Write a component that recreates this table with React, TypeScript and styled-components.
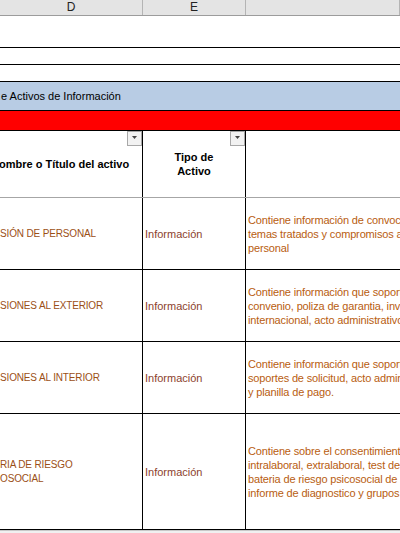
import React from "react";
import styled, { createGlobalStyle } from "styled-components";

const Global = createGlobalStyle`
  html, body { margin: 0; padding: 0; background: #ffffff; overflow: hidden; }
  body { font-family: "Liberation Sans", Arial, sans-serif; }
`;

const Sheet = styled.div`
  width: 400px;
  height: 533px;
  overflow: hidden;
  display: flex;
  flex-direction: column;
  background: #fff;
`;

const ColHeaderBar = styled.div`
  display: grid;
  grid-template-columns: 143px 103px 1fr;
  height: 16px;
  box-sizing: border-box;
  background: #e4e4e4;
  border-bottom: 1px solid #9c9c9c;
  flex: none;
`;

const ColLetter = styled.div`
  box-sizing: border-box;
  border-right: 1px solid #b4b4b4;
  font-size: 12px;
  color: #222;
  display: flex;
  align-items: center;
  justify-content: center;
  line-height: 15px;
`;

const PlainRow = styled.div<{ $h: number }>`
  height: ${(p) => p.$h}px;
  box-sizing: border-box;
  border-bottom: 1px solid #000;
  flex: none;
`;

const TitleBand = styled.div`
  height: 29px;
  box-sizing: border-box;
  background: #b8cce4;
  border-bottom: 1px solid #000;
  display: flex;
  align-items: center;
  font-size: 11px;
  color: #000;
  padding-left: 1px;
  white-space: nowrap;
  flex: none;
`;

const RedBand = styled.div`
  height: 20px;
  box-sizing: border-box;
  background: #ff0000;
  border-bottom: 1px solid #000;
  flex: none;
`;

const Row = styled.div<{ $h: number; $line: string }>`
  display: grid;
  grid-template-columns: 143px 103px 1fr;
  height: ${(p) => p.$h}px;
  box-sizing: border-box;
  border-bottom: 1px solid ${(p) => p.$line};
  flex: none;
`;

const Cell = styled.div<{ $center?: boolean; $last?: boolean }>`
  position: relative;
  box-sizing: border-box;
  border-right: ${(p) => (p.$last ? "none" : "1px solid #000")};
  display: flex;
  align-items: center;
  justify-content: ${(p) => (p.$center ? "center" : "flex-start")};
  overflow: hidden;
  white-space: nowrap;
`;

const HeadText = styled.div<{ $center?: boolean }>`
  font-weight: bold;
  font-size: 11px;
  line-height: 14px;
  color: #000;
  text-align: ${(p) => (p.$center ? "center" : "left")};
  margin-left: ${(p) => (p.$center ? "0" : "-1px")};
`;

const NameText = styled.div`
  font-size: 10px;
  letter-spacing: -0.15px;
  line-height: 14px;
  color: #9b4f16;
`;

const TypeText = styled.div`
  font-size: 11px;
  line-height: 14px;
  color: #8c3f2e;
  padding-left: 2px;
`;

const DescText = styled.div`
  font-size: 11px;
  letter-spacing: -0.15px;
  line-height: 14px;
  color: #b85d10;
  padding-left: 2px;
`;

const FilterButton = styled.div`
  position: absolute;
  top: 0;
  right: 0;
  width: 15px;
  height: 15px;
  box-sizing: border-box;
  background: #f2f2f2;
  border: 1px solid #a8a8a8;
  display: flex;
  justify-content: center;
  padding-top: 4px;
`;

const BottomEdge = styled.div`
  height: 4px;
  box-sizing: border-box;
  border-top: 1px solid #c8c8c8;
  border-bottom: 1px solid #c8c8c8;
  background: #f0f0f0;
  flex: none;
`;

const Arrow = () => (
  <svg width="5" height="3" viewBox="0 0 5 3">
    <path d="M0 0 H5 L2.5 3 Z" fill="#444" />
  </svg>
);

type Item = { name: string[]; desc: string[]; h: number };

const items: Item[] = [
  {
    name: ["SIÓN DE PERSONAL"],
    desc: [
      "Contiene información de convocatoria,",
      "temas tratados y compromisos adquiridos",
      "personal",
    ],
    h: 72,
  },
  {
    name: ["SIONES AL EXTERIOR"],
    desc: [
      "Contiene información que soporta la",
      "convenio, poliza de garantia, invitación",
      "internacional, acto administrativo",
    ],
    h: 72,
  },
  {
    name: ["SIONES AL INTERIOR"],
    desc: [
      "Contiene información que soporta la",
      "soportes de solicitud, acto administrativo",
      "y planilla de pago.",
    ],
    h: 72,
  },
  {
    name: ["RIA DE RIESGO", "OSOCIAL"],
    desc: [
      "Contiene sobre el consentimiento informado,",
      "intralaboral, extralaboral, test de estrés,",
      "bateria de riesgo psicosocial de los",
      "informe de diagnostico y grupos focales",
    ],
    h: 116,
  },
];

export default function App() {
  return (
    <>
      <Global />
      <Sheet>
        <ColHeaderBar>
          <ColLetter>D</ColLetter>
          <ColLetter>E</ColLetter>
          <ColLetter />
        </ColHeaderBar>
        <PlainRow $h={32} />
        <PlainRow $h={17} />
        <PlainRow $h={17} />
        <TitleBand>e Activos de Información</TitleBand>
        <RedBand />
        <Row $h={67} $line="#a6a6a6">
          <Cell>
            <HeadText>ombre o Título del activo</HeadText>
            <FilterButton>
              <Arrow />
            </FilterButton>
          </Cell>
          <Cell $center>
            <HeadText $center>
              Tipo de
              <br />
              Activo
            </HeadText>
            <FilterButton>
              <Arrow />
            </FilterButton>
          </Cell>
          <Cell $last />
        </Row>
        {items.map((it, i) => (
          <Row key={i} $h={it.h} $line="#000">
            <Cell>
              <NameText>
                {it.name.map((l, j) => (
                  <div key={j}>{l}</div>
                ))}
              </NameText>
            </Cell>
            <Cell>
              <TypeText>Información</TypeText>
            </Cell>
            <Cell $last>
              <DescText>
                {it.desc.map((l, j) => (
                  <div key={j}>{l}</div>
                ))}
              </DescText>
            </Cell>
          </Row>
        ))}
        <BottomEdge />
      </Sheet>
    </>
  );
}
